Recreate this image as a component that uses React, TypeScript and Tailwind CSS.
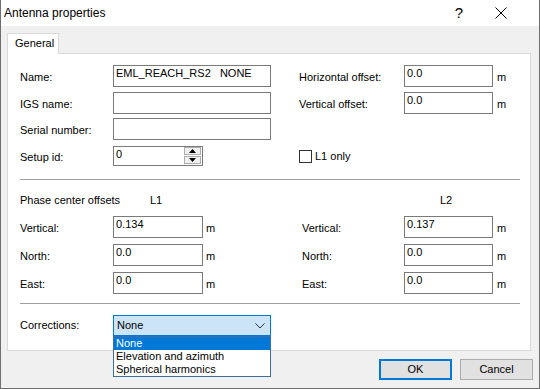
import React from "react";

const font = { fontFamily: '"Liberation Sans", Arial, sans-serif' };

function TextBox({ value = "", width, height = 22 }: { value?: string; width: string; height?: number }) {
  return (
    <div
      className={`${width} shrink-0 border border-[#7a7a7a] bg-white px-[2px] pt-[1px] leading-[13px] whitespace-pre`}
      style={{ height }}
    >
      {value}
    </div>
  );
}

function Label({ text, width }: { text: string; width: string }) {
  return <div className={`${width} shrink-0 mt-[6px] leading-[13px]`}>{text}</div>;
}

function Unit({ ml }: { ml: string }) {
  return <div className={`${ml} mt-[6px] leading-[13px]`}>m</div>;
}

function OffsetRow({ label, l1, l2, first }: { label: string; l1: string; l2: string; first?: boolean }) {
  return (
    <div className={`flex items-start h-[22px] ${first ? "mt-[9px]" : "mt-[6px]"}`}>
      <div className="flex items-start w-[282px] shrink-0">
        <Label text={label} width="w-[93px]" />
        <TextBox value={l1} width="w-[90px]" />
        <Unit ml="ml-[3px]" />
      </div>
      <div className="flex items-start">
        <Label text={label} width="w-[102px]" />
        <TextBox value={l2} width="w-[89px]" />
        <Unit ml="ml-[4px]" />
      </div>
    </div>
  );
}

function Spin() {
  return (
    <div className="relative w-[90px] h-[20px] shrink-0 border border-[#7a7a7a] bg-white px-[2px] pt-[1px] leading-[13px]">
      0
      <div className="absolute right-[1px] top-[0px] flex flex-col gap-[1px]">
        <div className="w-[17px] h-[8px] border border-[#adadad] bg-[#f0f0f0] flex items-center justify-center">
          <svg width="7" height="4" viewBox="0 0 7 4">
            <path d="M0 4 L3.5 0 L7 4 Z" fill="#000" />
          </svg>
        </div>
        <div className="w-[17px] h-[8px] border border-[#adadad] bg-[#f0f0f0] flex items-center justify-center">
          <svg width="7" height="4" viewBox="0 0 7 4">
            <path d="M0 0 L3.5 4 L7 0 Z" fill="#000" />
          </svg>
        </div>
      </div>
    </div>
  );
}

export default function App() {
  return (
    <div
      className="w-[540px] h-[389px] border-l border-r border-b border-[#6f6f6f] bg-[#f0f0f0] text-[11px] text-black flex flex-col"
      style={font}
    >
      {/* title bar */}
      <div className="h-[26px] shrink-0 bg-white flex items-center">
        <div className="pl-[3px] text-[12px] leading-[14px] -mt-[1px]">Antenna properties</div>
        <div className="ml-auto mr-[32px] text-[15px] leading-[16px]">?</div>
        <svg className="mr-[32px]" width="12" height="12" viewBox="0 0 12 12">
          <path d="M0.5 0.5 L11.5 11.5 M11.5 0.5 L0.5 11.5" stroke="#000" strokeWidth="1" />
        </svg>
      </div>

      {/* tab strip */}
      <div className="mt-[7px] pl-[6px] flex">
        <div className="relative z-10 w-[52px] h-[21px] -mb-[1px] border border-b-0 border-[#d9d9d9] bg-white pl-[7px] pt-[3px] leading-[13px]">
          General
        </div>
      </div>

      {/* tab page */}
      <div className="ml-[6px] w-[524px] h-[298px] shrink-0 border border-[#d9d9d9] bg-white">
        <div className="h-[125px] pl-[12px] pt-[11px] flex">
          <div className="w-[279px] shrink-0">
            <div className="flex items-start h-[22px]">
              <Label text="Name:" width="w-[93px]" />
              <TextBox value="EML_REACH_RS2   NONE" width="w-[158px]" />
            </div>
            <div className="flex items-start h-[22px] mt-[5px]">
              <Label text="IGS name:" width="w-[93px]" />
              <TextBox width="w-[158px]" />
            </div>
            <div className="flex items-start h-[22px] mt-[4px]">
              <Label text="Serial number:" width="w-[93px]" />
              <TextBox width="w-[158px]" />
            </div>
            <div className="flex items-start h-[20px] mt-[6px]">
              <div className="w-[93px] shrink-0 mt-[5px] leading-[13px]">Setup id:</div>
              <Spin />
            </div>
          </div>
          <div>
            <div className="flex items-start h-[22px]">
              <Label text="Horizontal offset:" width="w-[105px]" />
              <TextBox value="0.0" width="w-[89px]" />
              <Unit ml="ml-[4px]" />
            </div>
            <div className="flex items-start h-[22px] mt-[5px]">
              <Label text="Vertical offset:" width="w-[105px]" />
              <TextBox value="0.0" width="w-[89px]" />
              <Unit ml="ml-[4px]" />
            </div>
            <div className="flex items-center mt-[36px] h-[13px]">
              <div className="w-[13px] h-[13px] border border-[#333333] bg-white" />
              <div className="ml-[3px] leading-[13px]">L1 only</div>
            </div>
          </div>
        </div>

        <div className="ml-[12px] w-[500px] h-px bg-[#a0a0a0]" />

        <div className="pl-[12px]">
          <div className="flex mt-[14px] h-[13px] leading-[13px]">
            <div className="w-[130px]">Phase center offsets</div>
            <div className="w-[152px]">L1</div>
            <div className="pl-[138px]">L2</div>
          </div>
          <OffsetRow label="Vertical:" l1="0.134" l2="0.137" first />
          <OffsetRow label="North:" l1="0.0" l2="0.0" />
          <OffsetRow label="East:" l1="0.0" l2="0.0" />
        </div>

        <div className="ml-[12px] mt-[9px] w-[500px] h-px bg-[#a0a0a0]" />

        <div className="pl-[12px] mt-[11px] flex items-start">
          <div className="w-[93px] shrink-0 mt-[4px] leading-[13px]">Corrections:</div>
          <div className="relative w-[158px] h-[21px]">
            <div className="h-full border border-[#0078d7] bg-[#cce4f7] flex items-center pl-[3px] leading-[13px]">
              None
              <svg className="ml-auto mr-[5px]" width="10" height="6" viewBox="0 0 10 6">
                <path d="M0.5 0.5 L5 5 L9.5 0.5" fill="none" stroke="#333" strokeWidth="1" />
              </svg>
            </div>
            <div className="absolute left-0 top-full z-20 w-[158px] border border-[#3a6ea5] bg-white leading-[13px]">
              <div className="h-[13px] bg-[#0078d7] text-white pl-[2px]">None</div>
              <div className="h-[13px] pl-[2px]">Elevation and azimuth</div>
              <div className="h-[13px] pl-[2px]">Spherical harmonics</div>
            </div>
          </div>
        </div>
      </div>

      {/* buttons */}
      <div className="mt-[8px] pr-[6px] flex justify-end gap-[8px]">
        <button className="w-[73px] h-[21px] border-2 border-[#0078d7] bg-[#e1e1e1] leading-[13px]">OK</button>
        <button className="w-[73px] h-[21px] border border-[#adadad] bg-[#e1e1e1] leading-[13px]">Cancel</button>
      </div>
    </div>
  );
}
